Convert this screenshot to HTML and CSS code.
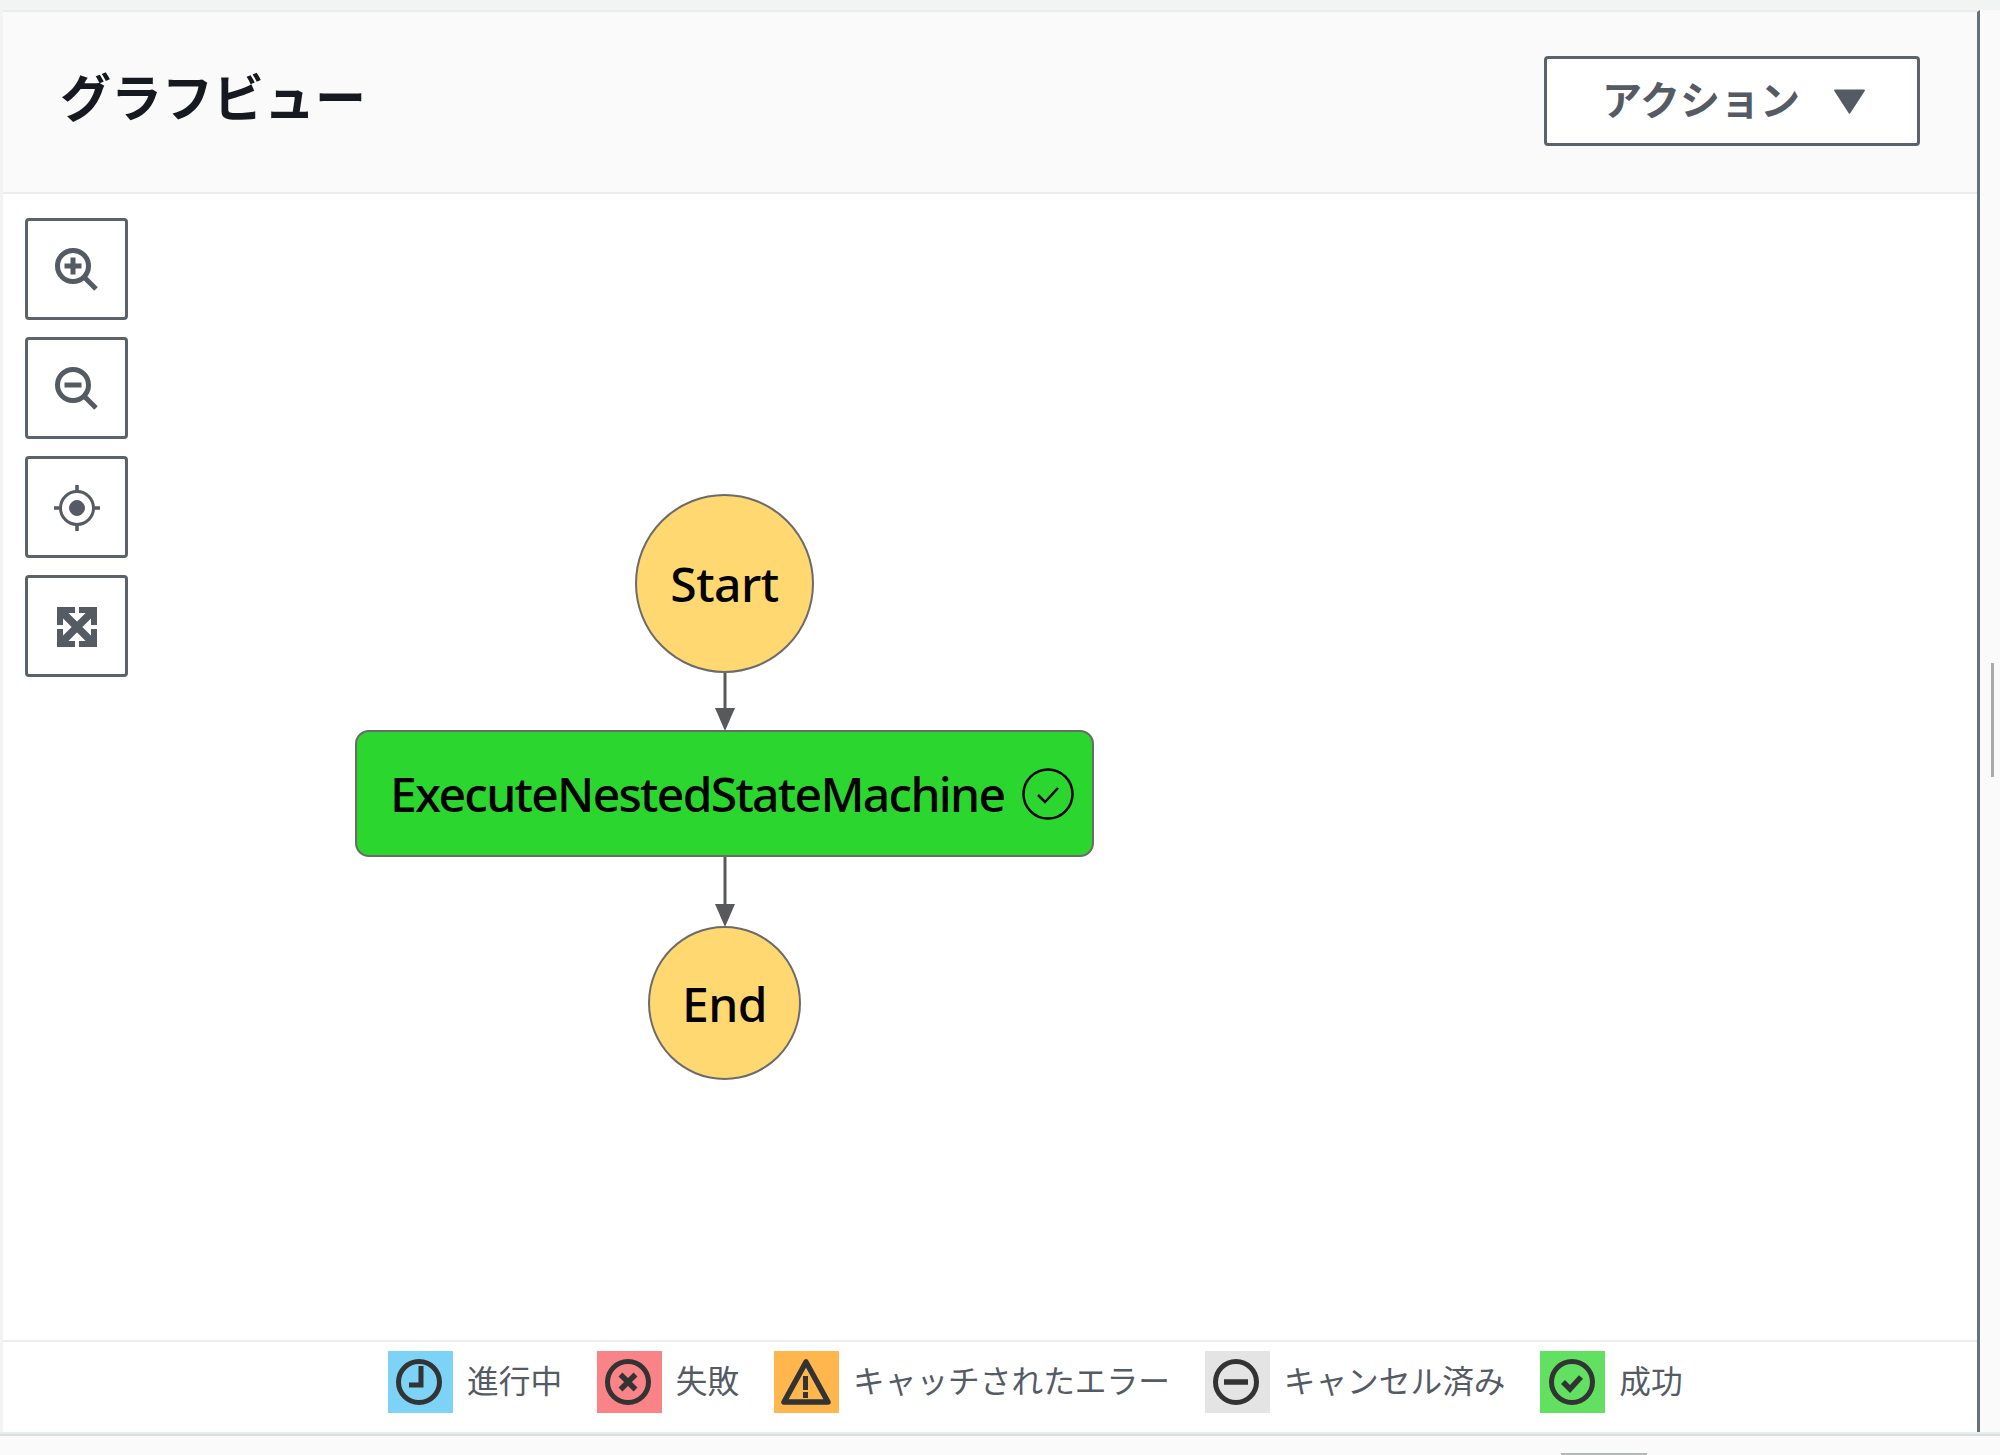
FILE: index.html
```html
<!DOCTYPE html>
<html lang="ja">
<head>
    <meta charset="UTF-8">
    <title>グラフビュー</title>
    <link rel="stylesheet" href="styles.css">
</head>
<body>
    <div class="panel">
        <header class="panel-header">
            <h1>グラフビュー</h1>
            <button class="action-button">
                <span class="action-label">アクション</span>
                <svg class="caret" viewBox="0 0 30 24"><path d="M2 2H28L15 22Z" fill="#545b64" stroke="#545b64" stroke-width="2" stroke-linejoin="round"/></svg>
            </button>
        </header>

        <div class="canvas">
            <div class="tools">
                <button class="tool">
                    <svg viewBox="0 0 48 48" fill="none" stroke="#545b64"><circle cx="20" cy="20" r="15.5" stroke-width="5"/><path d="M31 31L43 43" stroke-width="5"/><path d="M11.500 20H28.500M20 11.500V28.500" stroke-width="5"/></svg>
                </button>
                <button class="tool">
                    <svg viewBox="0 0 48 48" fill="none" stroke="#545b64"><circle cx="20" cy="20" r="15.5" stroke-width="5"/><path d="M31 31L43 43" stroke-width="5"/><path d="M11.500 20H28.500" stroke-width="5"/></svg>
                </button>
                <button class="tool">
                    <svg viewBox="0 0 48 48" fill="none" stroke="#545b64"><circle cx="24" cy="24" r="16.500" stroke-width="3"/><circle cx="24" cy="24" r="7.500" fill="#545b64"/><path d="M24 1V9M24 39V47M1 24H9M39 24H47" stroke-width="3.500"/></svg>
                </button>
                <button class="tool">
                    <svg viewBox="0 0 48 48" fill="#545b64"><path d="M4 4H22V10H16L13 11 11 13 10 16V22H4ZM44 4V22H38V16L37 13 35 11 32 10H26V4ZM44 44H26V38H32L35 37 37 35 38 32V26H44ZM4 44V26H10V32L11 35 13 37 16 38H22V44Z"/><path d="M7 7L41 41M41 7L7 41" stroke="#545b64" stroke-width="7.500"/></svg>
                </button>
            </div>

            <div class="graph">
                <div class="node-start">Start</div>
                <svg class="arrow arrow-short" viewBox="0 0 24 57"><path d="M12 0V38" stroke="#58595b" stroke-width="3"/><path d="M2 35H22L12 58Z" fill="#58595b"/></svg>
                <div class="node-task">
                    <span>ExecuteNestedStateMachine</span>
                    <svg class="task-check" viewBox="0 0 52 52" fill="none" stroke="#000" stroke-width="2.500"><circle cx="26" cy="26" r="24.500"/><path d="M16 27L23 34 36 20"/></svg>
                </div>
                <svg class="arrow arrow-long" viewBox="0 0 24 69"><path d="M12 0V50" stroke="#58595b" stroke-width="3"/><path d="M2 47H22L12 70Z" fill="#58595b"/></svg>
                <div class="node-end">End</div>
            </div>
        </div>

        <footer class="legend">
            <div class="legend-item">
                <span class="swatch swatch-running">
                    <svg viewBox="0 0 65 62" fill="none" stroke="#333"><circle cx="31" cy="31" r="20.500" stroke-width="5"/><path d="M33 15V34H21" stroke-width="5"/></svg>
                </span>
                <span class="legend-label">進行中</span>
            </div>
            <div class="legend-item">
                <span class="swatch swatch-failed">
                    <svg viewBox="0 0 65 62" fill="none" stroke="#333"><circle cx="31" cy="31" r="20.500" stroke-width="5"/><path d="M23.500 23.500L38.500 38.500M38.500 23.500L23.500 38.500" stroke-width="5.500"/></svg>
                </span>
                <span class="legend-label">失敗</span>
            </div>
            <div class="legend-item">
                <span class="swatch swatch-caught">
                    <svg viewBox="0 0 65 62" fill="none" stroke="#333"><path d="M32 11L10 51H54Z" stroke-width="5.500" stroke-linejoin="round"/><path d="M31.500 25V39" stroke-width="5"/><path d="M31.500 41V47" stroke-width="5"/></svg>
                </span>
                <span class="legend-label">キャッチされたエラー</span>
            </div>
            <div class="legend-item">
                <span class="swatch swatch-aborted">
                    <svg viewBox="0 0 65 62" fill="none" stroke="#333"><circle cx="31" cy="31" r="20.500" stroke-width="5"/><path d="M19 31H43" stroke-width="5.500"/></svg>
                </span>
                <span class="legend-label">キャンセル済み</span>
            </div>
            <div class="legend-item">
                <span class="swatch swatch-success">
                    <svg viewBox="0 0 65 62" fill="none" stroke="#333"><circle cx="32" cy="31" r="20.500" stroke-width="5"/><path d="M23 31L30 38 41 26" stroke-width="5.500"/></svg>
                </span>
                <span class="legend-label">成功</span>
            </div>
        </footer>
    </div>
    <div class="panel-rule"></div>

    <div class="scroll-thumb"></div>
    <div class="bottom-tab"></div>
</body>
</html>
```

FILE: styles.css
```css
html, body {
    margin: 0;
    height: 1455px;
    overflow: hidden;
}

body {
    position: relative;
    background: #fafafa;
    font-family: "Noto Sans CJK JP", "Noto Sans", sans-serif;
    padding: 10px 0 0;
    box-sizing: border-box;
}

body::before {
    content: "";
    position: absolute;
    top: 0;
    left: 0;
    width: 100%;
    height: 10px;
    background: #f2f3f3;
}

.panel {
    width: 1977px;
    height: 1422px;
    margin-left: 3px;
    box-sizing: border-box;
    border-right: 3px solid #687078;
    border-top: 2px solid #eaeded;
    background: #fff;
    display: flex;
    flex-direction: column;
    box-shadow: -3px 0 0 #f2f3f3;
}

.panel-rule {
    height: 2px;
    background: #d9dfde;
    border-top: 2px solid #eaeded;
}

.panel-header {
    height: 182px;
    box-sizing: border-box;
    background: #fafafa;
    border-bottom: 2px solid #eaeded;
    display: flex;
    justify-content: space-between;
    align-items: flex-start;
    padding: 44px 57px 0 57px;
}

h1 {
    margin: 9px 0 0;
    font-size: 51px;
    line-height: 60px;
    font-weight: 700;
    color: #16191f;
}

.action-button {
    width: 376px;
    height: 90px;
    box-sizing: border-box;
    background: #fff;
    border: 3px solid #5b626a;
    border-radius: 4px;
    color: #545b64;
    font-family: inherit;
    font-size: 40px;
    font-weight: 700;
    display: flex;
    align-items: center;
    justify-content: center;
    gap: 33px;
    padding: 0 0 0 4px;
}

.action-label {
    margin-bottom: 7px;
}

.caret {
    width: 33px;
    height: 27px;
}

.canvas {
    flex: 1;
    display: flex;
    align-items: flex-start;
    padding: 24px 0 0 22px;
}

.tools {
    display: flex;
    flex-direction: column;
    gap: 17px;
}

.tool {
    width: 103px;
    height: 102px;
    box-sizing: border-box;
    background: #fff;
    border: 3px solid #5b626a;
    border-radius: 4px;
    padding: 2px 0 0;
    display: flex;
    align-items: center;
    justify-content: center;
}

.tool svg {
    width: 48px;
    height: 48px;
}

.graph {
    width: 739px;
    margin: 276px 0 0 227px;
    display: flex;
    flex-direction: column;
    align-items: center;
    font-family: "Noto Sans", sans-serif;
    font-size: 48px;
    font-weight: 500;
    color: #000;
}

.node-start, .node-end {
    box-sizing: border-box;
    background: #ffd872;
    border: 2px solid #6b6b6b;
    border-radius: 50%;
    display: flex;
    align-items: center;
    justify-content: center;
    letter-spacing: -0.5px;
}

.node-start {
    width: 179px;
    height: 179px;
}

.node-end {
    width: 153px;
    height: 154px;
}

.node-task {
    width: 739px;
    height: 127px;
    box-sizing: border-box;
    background: #2bd62f;
    border: 2px solid #6b6b6b;
    border-radius: 14px;
    display: flex;
    align-items: center;
    justify-content: space-between;
    padding: 0 18px 0 33px;
    letter-spacing: -1.7px;
}

.task-check {
    width: 52px;
    height: 52px;
    flex-shrink: 0;
}

.arrow {
    width: 24px;
    display: block;
    overflow: visible;
}

.arrow-short {
    height: 57px;
}

.arrow-long {
    height: 69px;
}

.legend {
    height: 92px;
    flex-shrink: 0;
    box-sizing: border-box;
    border-top: 2px solid #eaeded;
    padding: 9px 0 0 385px;
    display: flex;
    align-items: flex-start;
    gap: 34.8px;
    font-size: 31.7px;
    color: #545b64;
}

.legend-item {
    display: flex;
    align-items: center;
    gap: 14px;
    height: 62px;
}

.legend-label {
    margin-top: -6px;
}

.swatch {
    width: 65px;
    height: 62px;
    display: block;
}

.swatch svg {
    display: block;
    width: 65px;
    height: 62px;
}

.swatch-running { background: #7dd3f5; }
.swatch-failed { background: #fa8387; }
.swatch-caught { background: #ffb64d; }
.swatch-aborted { background: #e4e4e4; }
.swatch-success { background: #61e062; }

/* thin bits at the window edge */
.scroll-thumb {
    position: absolute;
    left: 1991px;
    top: 663px;
    width: 3px;
    height: 114px;
    background: #aaa;
}

.bottom-tab {
    position: absolute;
    left: 1561px;
    top: 1453px;
    width: 86px;
    height: 2px;
    background: #b4b8b8;
}
```
